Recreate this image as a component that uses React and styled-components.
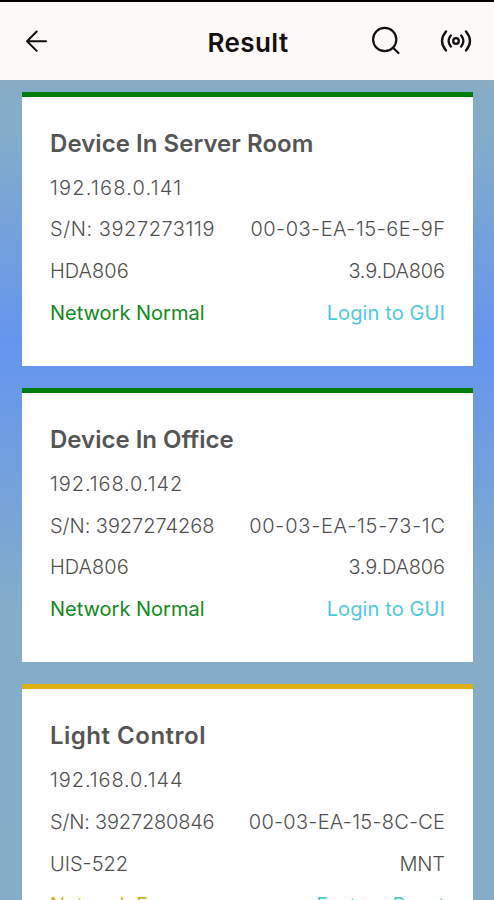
import React from 'react'
import styled, { createGlobalStyle } from "styled-components"

const GlobalStyle = createGlobalStyle`
* {
  box-sizing: border-box;
}
body {
  margin: 0;
  font-family: Inter, "Liberation Sans", sans-serif;
}
`

const Screen = styled.div`
height: 900px;
display: flex;
flex-direction: column;
overflow: hidden;
border-top: 2px solid #000;
background: #fff;
`

const Header = styled.header`
height: 77.5px;
flex: none;
display: grid;
grid-template-columns: 1fr auto 1fr;
align-items: center;
padding: 0 22px 0 24px;
background: #fefaf9;
`

const Title = styled.h1`
margin: 5px 0 0;
font-size: 26px;
line-height: 32px;
font-weight: 600;
letter-spacing: 0.4px;
color: #111;
`

const Actions = styled.div`
display: flex;
justify-content: flex-end;
gap: 38px;
`

const Icon = styled.svg`
display: block;
fill: none;
stroke: #111;
stroke-linecap: round;
stroke-linejoin: round;
`

const List = styled.main`
flex: 1;
min-height: 0;
display: flex;
flex-direction: column;
gap: 22px;
padding: 12.5px 21.5px 0 22px;
overflow: hidden;
background: linear-gradient(
  #8bacc2 0px, #85adc8 14px, #84adc9 50px, #6595ee 260px,
  #6797ec 292px, #84adc9 530px, #86adc8 820px
);
`

const Card = styled.section`
height: 274.2px;
flex: none;
padding: 32px 27.5px 0 28px;
border-top: 5px solid ${({ accent }) => accent};
background: #fff;
`

const Name = styled.h2`
margin: 0 0 14.6px;
font-size: 24px;
line-height: 30px;
font-weight: 600;
letter-spacing: ${({ spacing }) => spacing || 0}px;
color: #555;
white-space: nowrap;
`

const Row = styled.div`
height: 41.8px;
display: flex;
justify-content: space-between;
font-size: 20px;
line-height: 28px;
color: #555;
white-space: nowrap;
`

const Text = styled.span`
font-weight: ${({ weight }) => weight || 300};
letter-spacing: ${({ spacing }) => spacing || 0}px;
margin-right: ${({ spacing }) => -(spacing || 0)}px;
color: ${({ tone }) => tone || "#505050"};
`

const devices = [
    {
        name: "Device In Server Room", ip: "192.168.0.141", serial: "3927273119", mac: "00-03-EA-15-6E-9F",
        model: "HDA806", version: "3.9.DA806", status: "Network Normal", action: "Login to GUI",
        accent: "#047c08", tone: "#128a1b",
        spacing: { name: 0.05, ip: 1.2, serial: 0.55, mac: 0.5, version: -0.2, action: 0.12 }
    },
    {
        name: "Device In Office", ip: "192.168.0.142", serial: "3927274268", mac: "00-03-EA-15-73-1C",
        model: "HDA806", version: "3.9.DA806", status: "Network Normal", action: "Login to GUI",
        accent: "#047c08", tone: "#128a1b",
        spacing: { name: 0, ip: 0.9, serial: -0.05, mac: 0.75, version: -0.2, action: 0.12 }
    },
    {
        name: "Light Control", ip: "192.168.0.144", serial: "3927280846", mac: "00-03-EA-15-8C-CE",
        model: "UIS-522", version: "MNT", status: "Network Error", action: "Factory Reset",
        accent: "#deaf10", tone: "#deaf10",
        spacing: { name: 0.5, ip: 0.9, serial: -0.2, mac: 0.25, version: -0.2, action: -0.1 }
    },
]

const DeviceCard = ({ device }) => {
    const { spacing } = device

    return (
        <Card accent={device.accent}>
            <Name spacing={spacing.name}>{device.name}</Name>
            <Row><Text spacing={spacing.ip}>{device.ip}</Text></Row>
            <Row>
                <Text spacing={spacing.serial}>S/N: {device.serial}</Text>
                <Text spacing={spacing.mac}>{device.mac}</Text>
            </Row>
            <Row>
                <Text>{device.model}</Text>
                <Text spacing={spacing.version}>{device.version}</Text>
            </Row>
            <Row>
                <Text weight={400} tone={device.tone}>{device.status}</Text>
                <Text weight={400} tone="#52c8e0" spacing={spacing.action}>{device.action}</Text>
            </Row>
        </Card>
    )
}

const App = () => {
    return (
        <Screen>
            <GlobalStyle />
            <Header>
                <Icon width="26" height="24" viewBox="0 0 26 24" strokeWidth="2">
                    <path d="M22 12.2H3M12.7 2.5L3 12.2l9.7 9.7" />
                </Icon>
                <Title>Result</Title>
                <Actions>
                    <Icon width="30" height="30" viewBox="0 0 30 30" strokeWidth="2.2">
                        <circle cx="12.7" cy="13.5" r="11.6" />
                        <path d="M21 21.8l5.5 5.2" />
                    </Icon>
                    <Icon width="32" height="30" viewBox="0 0 32 30" strokeWidth="2.3">
                        <circle cx="16" cy="15" r="2.8" />
                        <path d="M10.8 9.5q-4.4 5.5 0 11M21.2 9.5q4.4 5.5 0 11M6 5.5q-8 9.5 0 19M26 5.5q8 9.5 0 19" />
                    </Icon>
                </Actions>
            </Header>
            <List>
                {devices.map((device) => {
                    return <DeviceCard device={device} key={device.ip} />
                })}
            </List>
        </Screen>
    )
}

export default App
